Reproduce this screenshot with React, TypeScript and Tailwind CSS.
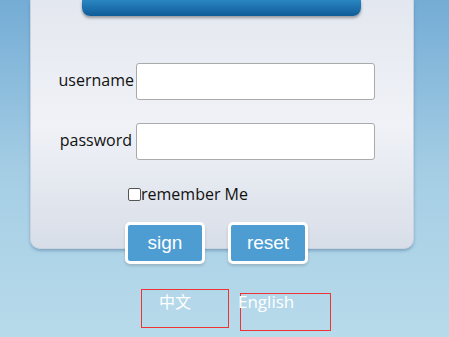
export default function App() {
  return (
    <div
      className="w-[449px] h-[337px] overflow-hidden bg-gradient-to-b from-[#74acd5] via-[#a4cde4] to-[#b8dbeb]"
      style={{ fontFamily: '"Open Sans", "Noto Sans", sans-serif' }}
    >
      {/* login panel */}
      <div className="ml-[30px] w-[384px] h-[249px] rounded-b-[10px] border-x border-b border-[#c9d3e0] bg-gradient-to-b from-[#e3e7ef] via-[#f0f2f7] to-[#d8dee8] shadow-[0_2px_3px_rgba(70,110,150,0.45)]">
        <div className="ml-[51px] w-[279px] h-[16px] rounded-b-[8px] bg-gradient-to-b from-[#2a86c2] to-[#0f5c98] shadow-[0_2px_3px_rgba(0,0,0,0.35)]" />

        <div className="flex items-center pl-[27px] mt-[47px] h-[37px]">
          <span className="w-[76px] text-right text-[16px] text-[#111] -mt-[3px]">username</span>
          <input className="ml-[2px] w-[239px] h-[37px] rounded-[3px] border border-[#aaa] bg-white" />
        </div>

        <div className="flex items-center pl-[27px] mt-[23px] h-[37px]">
          <span className="w-[76px] text-right pr-[2px] text-[16px] text-[#111] -mt-[3px]">password</span>
          <input type="password" className="ml-[2px] w-[239px] h-[37px] rounded-[3px] border border-[#aaa] bg-white" />
        </div>

        <div className="flex items-center pl-[97px] mt-[26px] h-[16px]">
          <span className="w-[13px] h-[13px] rounded-[2px] border border-[#555] bg-white" />
          <span className="text-[16px] text-[#111] leading-none">remember Me</span>
        </div>

        <div className="flex pl-[94px] mt-[20px] gap-[23px]">
          <button
            type="button"
            className="w-[80px] h-[42px] rounded-[5px] border-[3px] border-white bg-[#4d9dd3] text-white text-[19px] shadow-[0_2px_3px_rgba(0,0,0,0.15)]"
            style={{ fontFamily: '"Liberation Sans", Arial, sans-serif' }}
          >
            sign
          </button>
          <button
            type="button"
            className="w-[80px] h-[42px] rounded-[5px] border-[3px] border-white bg-[#4d9dd3] text-white text-[19px] shadow-[0_2px_3px_rgba(0,0,0,0.15)]"
            style={{ fontFamily: '"Liberation Sans", Arial, sans-serif' }}
          >
            reset
          </button>
        </div>
      </div>

      {/* language links */}
      <div className="flex items-start mt-[40px] pl-[141px] text-white text-[16px]">
        <div className="w-[88px] h-[39px] border border-[#ee3333] pl-[17px] pt-[1px] leading-[20px]" style={{ fontFamily: '"Noto Sans CJK SC", sans-serif' }}>
          中文
        </div>
        <div className="ml-[11px] mt-[4px] w-[91px] h-[38px] border border-[#ee3333] leading-[16px]">
          <span className="-ml-[3px] block text-[17px]">English</span>
        </div>
      </div>
    </div>
  );
}
